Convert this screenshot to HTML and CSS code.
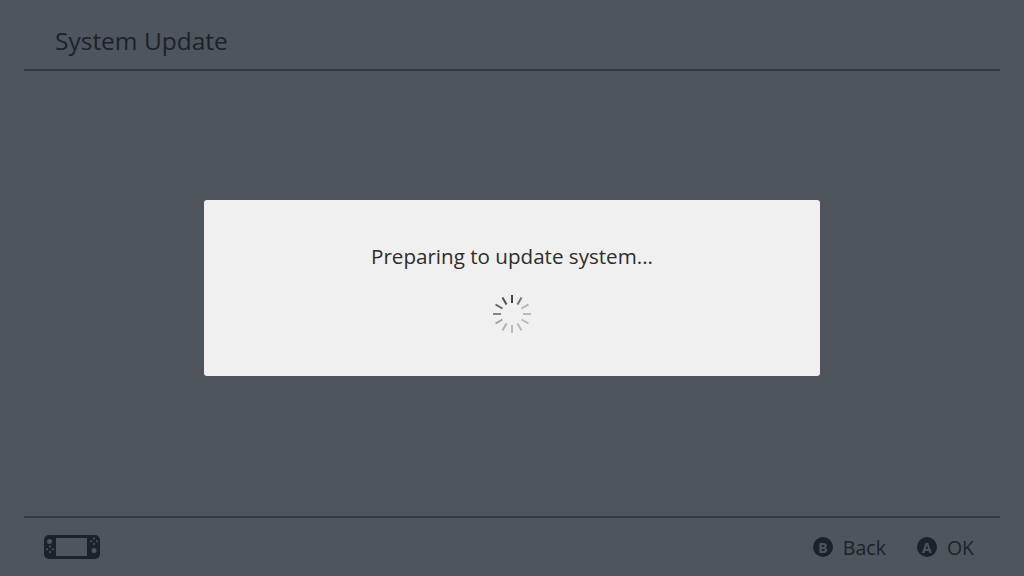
FILE: index.html
```html
<!DOCTYPE html>
<html>
  <head>
    <meta charset="UTF-8" />
    <title>System Update</title>
    <link rel="stylesheet" href="styles.css">
  </head>
  <body>
    <header class="top-bar">
      <h1 class="title">System Update</h1>
    </header>

    <main class="content">
      <div class="dialog">
        <p class="dialog-text">Preparing to update system...</p>
        <svg class="spinner" width="42" height="42" viewBox="-21 -21 42 42">
          <g stroke="#3a3f45" stroke-width="2" stroke-linecap="butt">
            <line x1="0" y1="-19" x2="0" y2="-11" opacity="0.95" />
            <line x1="0" y1="-19" x2="0" y2="-11" opacity="0.7" transform="rotate(30)" />
            <line x1="0" y1="-19" x2="0" y2="-11" opacity="0.35" transform="rotate(60)" />
            <line x1="0" y1="-19" x2="0" y2="-11" opacity="0.3" transform="rotate(90)" />
            <line x1="0" y1="-19" x2="0" y2="-11" opacity="0.3" transform="rotate(120)" />
            <line x1="0" y1="-19" x2="0" y2="-11" opacity="0.3" transform="rotate(150)" />
            <line x1="0" y1="-19" x2="0" y2="-11" opacity="0.3" transform="rotate(180)" />
            <line x1="0" y1="-19" x2="0" y2="-11" opacity="0.35" transform="rotate(210)" />
            <line x1="0" y1="-19" x2="0" y2="-11" opacity="0.45" transform="rotate(240)" />
            <line x1="0" y1="-19" x2="0" y2="-11" opacity="0.6" transform="rotate(270)" />
            <line x1="0" y1="-19" x2="0" y2="-11" opacity="0.8" transform="rotate(300)" />
            <line x1="0" y1="-19" x2="0" y2="-11" opacity="0.9" transform="rotate(330)" />
          </g>
        </svg>
      </div>
    </main>

    <footer class="bottom-bar">
      <svg class="console" width="56" height="24" viewBox="0 0 56 24">
        <rect width="56" height="24" rx="5" fill="#1c2229" />
        <rect x="12" y="3" width="31" height="18" fill="#4e555d" />
        <circle cx="5.5" cy="6.5" r="2.5" fill="#4e555d" />
        <circle cx="6" cy="11.5" r="1" fill="#4e555d" />
        <circle cx="6" cy="17" r="1" fill="#4e555d" />
        <circle cx="3.2" cy="14.3" r="1" fill="#4e555d" />
        <circle cx="8.8" cy="14.3" r="1" fill="#4e555d" />
        <circle cx="50" cy="3.5" r="1" fill="#4e555d" />
        <circle cx="50" cy="9" r="1" fill="#4e555d" />
        <circle cx="47.2" cy="6.2" r="1" fill="#4e555d" />
        <circle cx="52.8" cy="6.2" r="1" fill="#4e555d" />
        <circle cx="50" cy="15.5" r="2.5" fill="#4e555d" />
      </svg>
      <div class="actions">
        <div class="action"><span class="btn-icon">B</span>Back</div>
        <div class="action"><span class="btn-icon">A</span>OK</div>
      </div>
    </footer>
  </body>
</html>
```

FILE: styles.css
```css
body {
  margin: 0;
  width: 1024px;
  height: 576px;
  overflow: hidden;
  display: flex;
  flex-direction: column;
  background: #4e555d;
  color: #1c2229;
  font-family: "Open Sans", sans-serif;
}

.top-bar {
  height: 69px;
  margin: 0 24px;
  padding-left: 31px;
  display: flex;
  align-items: flex-end;
  border-bottom: 2px solid #33393f;
}
.title {
  margin: 0 0 11px;
  font-size: 24.5px;
  line-height: 34px;
  font-weight: 400;
}

.content {
  flex-grow: 1;
  padding-bottom: 12px;
  display: flex;
  align-items: center;
  justify-content: center;
}

.dialog {
  width: 616px;
  height: 176px;
  padding-top: 42px;
  box-sizing: border-box;
  display: flex;
  flex-direction: column;
  align-items: center;
  background: #f0f0f0;
  border-radius: 3px;
  color: #2d2d2d;
}
.dialog-text {
  margin: 0;
  font-size: 20.6px;
  line-height: 28px;
}
.spinner {
  margin-top: 23px;
}

.bottom-bar {
  height: 58px;
  margin: 0 24px;
  padding: 0 26px 0 20px;
  display: flex;
  align-items: center;
  justify-content: space-between;
  border-top: 2px solid #33393f;
}
.console {
  display: block;
}
.actions {
  display: flex;
  gap: 31px;
}
.action {
  display: flex;
  align-items: center;
  gap: 10px;
  font-size: 19.5px;
}
.btn-icon {
  width: 20px;
  height: 20px;
  border-radius: 50%;
  display: flex;
  align-items: center;
  justify-content: center;
  background: #1c2229;
  color: #4e555d;
  font-size: 14px;
  font-weight: 700;
}
```
